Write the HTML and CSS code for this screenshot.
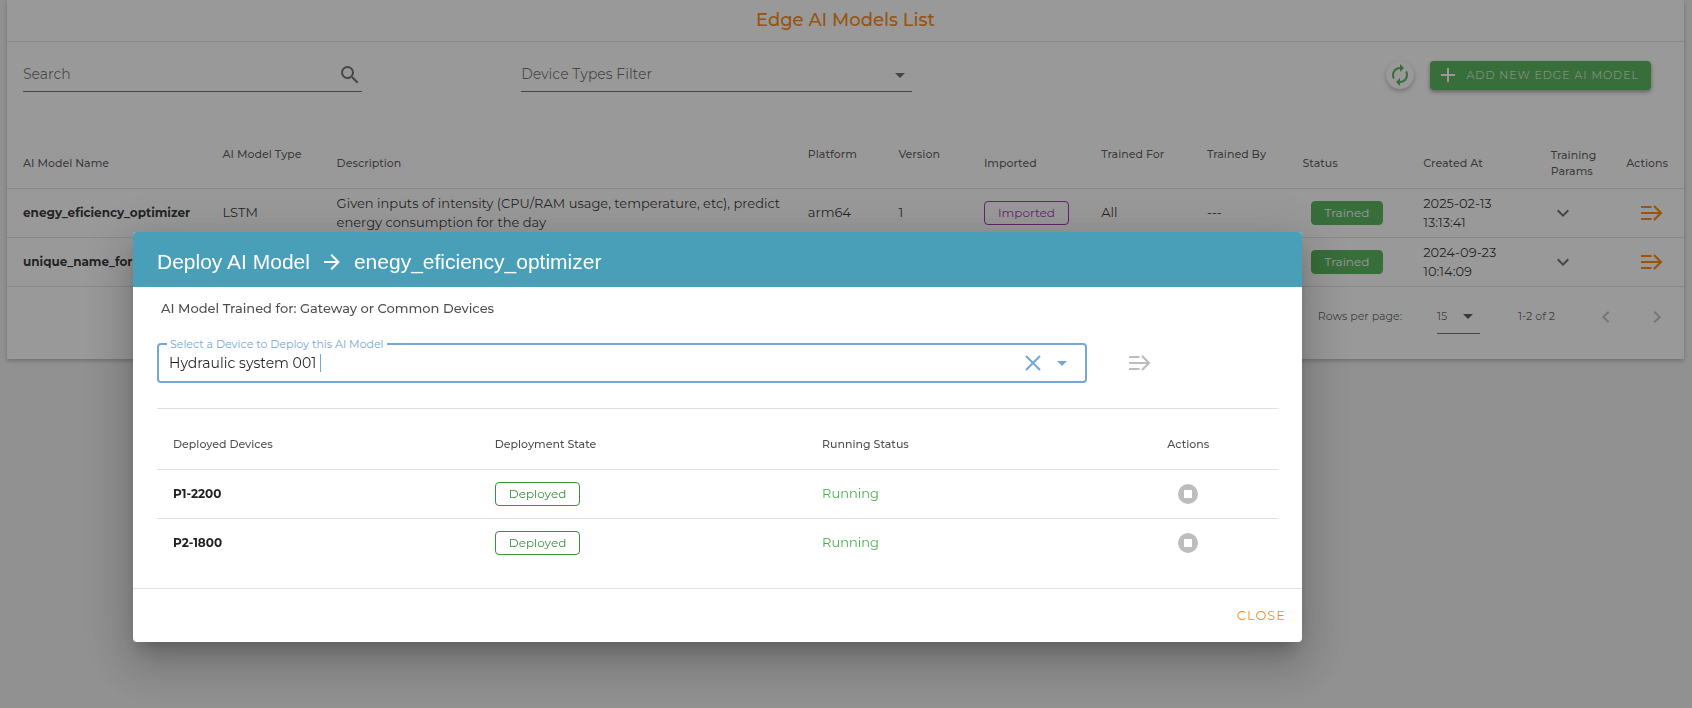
FILE: index.html
```
<!DOCTYPE html>
<html lang="en">
<head>
    <meta charset="UTF-8">
    <meta name="viewport" content="width=device-width, initial-scale=1.0">
    <title>Edge AI Models List</title>
    <link rel="stylesheet" href="styles.css">
</head>
<body>
    <!-- Shared icons -->
    <svg class="sprite" aria-hidden="true">
        <symbol id="icon-deploy" viewBox="0 0 24 24">
            <path d="M2 6h10.500M2 12h18.500M2 18h10.500M15 5l7 7l-7 7" fill="none" stroke="currentColor" stroke-width="2.200"/>
        </symbol>
        <symbol id="icon-caret" viewBox="0 0 24 24">
            <path d="M7 10l5 5l5-5z" fill="currentColor"/>
        </symbol>
        <symbol id="icon-down" viewBox="0 0 24 24">
            <path d="M7.410 8.580L12 13.170l4.590-4.590L18 10l-6 6l-6-6z" fill="currentColor"/>
        </symbol>
        <symbol id="icon-stop" viewBox="0 0 24 24">
            <path d="M12 2a10 10 0 1 0 0 20a10 10 0 0 0 0-20M8 8h8v8H8z" fill="currentColor" fill-rule="evenodd"/>
        </symbol>
    </svg>

    <main class="card">
        <h1 class="card-title">Edge AI Models List</h1>

        <div class="toolbar">
            <label class="field search">
                <input type="text" placeholder="Search" aria-label="Search">
                <svg class="icon" viewBox="0 0 24 24"><path d="M9.500 3A6.500 6.500 0 0 1 16 9.500c0 1.610-.590 3.090-1.560 4.230l.270.270h.790l5 5l-1.500 1.500l-5-5v-.790l-.270-.270A6.516 6.516 0 0 1 9.500 16a6.500 6.500 0 0 1 0-13m0 2C7 5 5 7 5 9.500S7 14 9.500 14S14 12 14 9.500S12 5 9.500 5z" fill="currentColor"/></svg>
            </label>
            <label class="field filter">
                <select aria-label="Device Types Filter">
                    <option>Device Types Filter</option>
                </select>
                <svg class="icon"><use href="#icon-caret"/></svg>
            </label>
            <div class="toolbar-actions">
                <button type="button" class="refresh" aria-label="Refresh">
                    <svg class="icon" viewBox="0 0 24 24"><path d="M12 6v3l4-4l-4-4v3a8 8 0 0 0-8 8c0 1.570.460 3.030 1.240 4.260L6.700 14.800A5.900 5.900 0 0 1 6 12a6 6 0 0 1 6-6m6.760 1.740L17.300 9.200c.440.840.700 1.800.700 2.800a6 6 0 0 1-6 6v-3l-4 4l4 4v-3a8 8 0 0 0 8-8c0-1.570-.460-3.030-1.240-4.260z" fill="currentColor"/></svg>
                </button>
                <button type="button" class="add">
                    <svg class="icon" viewBox="0 0 24 24"><path d="M19 13h-6v6h-2v-6H5v-2h6V5h2v6h6z" fill="currentColor"/></svg>
                    ADD NEW EDGE AI MODEL
                </button>
            </div>
        </div>

        <table class="models">
            <thead>
                <tr>
                    <th class="col-name">AI Model Name</th>
                    <th class="col-type top">AI Model Type</th>
                    <th class="col-description">Description</th>
                    <th class="col-platform top">Platform</th>
                    <th class="col-version top">Version</th>
                    <th class="col-imported">Imported</th>
                    <th class="col-for top">Trained For</th>
                    <th class="col-by top">Trained By</th>
                    <th class="col-status">Status</th>
                    <th class="col-created">Created At</th>
                    <th class="col-params">Training Params</th>
                    <th class="col-actions">Actions</th>
                </tr>
            </thead>
            <tbody>
                <tr>
                    <td class="name">enegy_eficiency_optimizer</td>
                    <td>LSTM</td>
                    <td class="description">Given inputs of intensity (CPU/RAM usage, temperature, etc), predict energy consumption for the day</td>
                    <td>arm64</td>
                    <td>1</td>
                    <td><span class="chip imported">Imported</span></td>
                    <td>All</td>
                    <td>---</td>
                    <td class="status"><span class="chip trained">Trained</span></td>
                    <td>2025-02-13 13:13:41</td>
                    <td><button type="button" class="icon-button" aria-label="Show training params"><svg class="icon"><use href="#icon-down"/></svg></button></td>
                    <td class="actions"><button type="button" class="icon-button deploy" aria-label="Deploy"><svg class="icon"><use href="#icon-deploy"/></svg></button></td>
                </tr>
                <tr>
                    <td class="name">unique_name_for</td>
                    <td></td>
                    <td></td>
                    <td></td>
                    <td></td>
                    <td></td>
                    <td></td>
                    <td></td>
                    <td class="status"><span class="chip trained">Trained</span></td>
                    <td>2024-09-23 10:14:09</td>
                    <td><button type="button" class="icon-button" aria-label="Show training params"><svg class="icon"><use href="#icon-down"/></svg></button></td>
                    <td class="actions"><button type="button" class="icon-button deploy" aria-label="Deploy"><svg class="icon"><use href="#icon-deploy"/></svg></button></td>
                </tr>
            </tbody>
        </table>

        <div class="pagination">
            <label for="rows">Rows per page:</label>
            <div class="rows-select">
                <select id="rows">
                    <option>15</option>
                </select>
                <svg class="icon"><use href="#icon-caret"/></svg>
            </div>
            <span class="range">1-2 of 2</span>
            <button type="button" class="icon-button" aria-label="Previous page" disabled>
                <svg class="icon" viewBox="0 0 24 24"><path d="M15.410 16.580L10.830 12l4.580-4.590L14 6l-6 6l6 6z" fill="currentColor"/></svg>
            </button>
            <button type="button" class="icon-button" aria-label="Next page" disabled>
                <svg class="icon" viewBox="0 0 24 24"><path d="M8.590 16.580L13.170 12L8.590 7.410L10 6l6 6l-6 6z" fill="currentColor"/></svg>
            </button>
        </div>
    </main>

    <div class="overlay">
        <section class="dialog" role="dialog" aria-modal="true" aria-labelledby="dialog-title">
            <h2 class="dialog-title" id="dialog-title">
                Deploy AI Model
                <svg class="icon" viewBox="0 0 24 24"><path d="M4 11v2h12l-5.500 5.500l1.420 1.420L19.840 12l-7.920-7.920L10.500 5.500L16 11z" fill="currentColor"/></svg>
                enegy_eficiency_optimizer
            </h2>

            <div class="dialog-body">
                <p class="trained-for">AI Model Trained for: Gateway or Common Devices</p>

                <div class="device-row">
                    <div class="device-field">
                        <label for="device">Select a Device to Deploy this AI Model</label>
                        <input type="text" id="device" value="Hydraulic system 001">
                        <span class="cursor"></span>
                        <button type="button" class="icon-button clear" aria-label="Clear">
                            <svg class="icon" viewBox="0 0 24 24"><path d="M5 5l14 14M19 5L5 19" fill="none" stroke="currentColor" stroke-width="2"/></svg>
                        </button>
                        <button type="button" class="icon-button" aria-label="Open list">
                            <svg class="icon"><use href="#icon-caret"/></svg>
                        </button>
                    </div>
                    <button type="button" class="icon-button" aria-label="Deploy to device" disabled>
                        <svg class="icon"><use href="#icon-deploy"/></svg>
                    </button>
                </div>

                <table class="devices">
                    <thead>
                        <tr>
                            <th class="col-device">Deployed Devices</th>
                            <th class="col-state">Deployment State</th>
                            <th class="col-running">Running Status</th>
                            <th class="col-stop">Actions</th>
                        </tr>
                    </thead>
                    <tbody>
                        <tr>
                            <td class="name">P1-2200</td>
                            <td><span class="chip deployed">Deployed</span></td>
                            <td class="running">Running</td>
                            <td class="stop"><button type="button" class="icon-button" aria-label="Stop" disabled><svg class="icon"><use href="#icon-stop"/></svg></button></td>
                        </tr>
                        <tr>
                            <td class="name">P2-1800</td>
                            <td><span class="chip deployed">Deployed</span></td>
                            <td class="running">Running</td>
                            <td class="stop"><button type="button" class="icon-button" aria-label="Stop" disabled><svg class="icon"><use href="#icon-stop"/></svg></button></td>
                        </tr>
                    </tbody>
                </table>
            </div>

            <div class="dialog-footer">
                <button type="button" class="close">CLOSE</button>
            </div>
        </section>
    </div>
</body>
</html>
```
FILE: styles.css
```
* {
    margin: 0;
    padding: 0;
    box-sizing: border-box;
}

body {
    font-family: Montserrat, Inter, sans-serif;
    font-size: 13px;
    line-height: 19px;
    color: rgba(0, 0, 0, 0.87);
    background-color: #f0f0f0;
    min-height: 100vh;
    padding: 0 8px 0 7px;
}

button,
input,
select {
    font: inherit;
    color: inherit;
    background: none;
    border: none;
    outline: none;
}

button {
    cursor: pointer;
}

select {
    appearance: none;
}

.sprite {
    display: none;
}

.icon {
    display: block;
    flex: none;
    width: 24px;
    height: 24px;
}

/* Models card */
.card {
    background-color: #fff;
    box-shadow: 0 2px 4px rgba(0, 0, 0, 0.25);
    padding-bottom: 16px;
}

.card-title {
    height: 42px;
    line-height: 40px;
    border-bottom: 1px solid rgba(0, 0, 0, 0.12);
    text-align: center;
    font-size: 18px;
    font-weight: 500;
    color: #fb8000;
}

.toolbar {
    display: flex;
    align-items: center;
    padding: 16px 33px 0 16px;
}

.field {
    display: flex;
    align-items: center;
    height: 34px;
    border-bottom: 1px solid rgba(0, 0, 0, 0.6);
    color: rgba(0, 0, 0, 0.6);
}

.field input,
.field select {
    flex: 1;
    min-width: 0;
    font-size: 14px;
}

.field input::placeholder {
    color: rgba(0, 0, 0, 0.6);
}

.search {
    width: 20.8%;
}

.filter {
    width: 24%;
    margin-left: 9.8%;
}

.toolbar-actions {
    display: flex;
    align-items: center;
    gap: 16px;
    margin-left: auto;
}

.refresh {
    padding: 2px;
    border-radius: 50%;
    color: #4caf50;
    box-shadow: 0 2px 4px rgba(0, 0, 0, 0.3);
}

.add {
    display: flex;
    align-items: center;
    gap: 7px;
    height: 29px;
    padding: 0 12px 0 6px;
    border-radius: 4px;
    background-color: #4caf50;
    box-shadow: 0 2px 4px rgba(0, 0, 0, 0.4);
    color: #fff;
    font-size: 11px;
    font-weight: 300;
    letter-spacing: 1px;
}

/* Tables */
table {
    width: 100%;
    border-collapse: collapse;
    table-layout: fixed;
}

th {
    padding: 0 16px;
    text-align: left;
    font-size: 11px;
    line-height: 16px;
    font-weight: 500;
    color: rgba(0, 0, 0, 0.7);
}

td {
    height: 49px;
    padding: 0 16px;
    border-top: 1px solid rgba(0, 0, 0, 0.12);
}

.name {
    font-size: 12px;
    font-weight: 700;
    white-space: nowrap;
}

.models {
    margin-top: 46px;
    border-bottom: 1px solid rgba(0, 0, 0, 0.12);
}

.models th {
    height: 50px;
}

.models .top {
    padding-top: 8px;
    vertical-align: top;
}

.models .col-type,
.models .col-params,
.models .col-actions {
    padding-right: 8px;
}

.models .description {
    padding-right: 8px;
}

.col-name { width: 11.9%; }
.col-type { width: 6.8%; }
.col-description { width: 28.1%; }
.col-platform { width: 5.4%; }
.col-version { width: 5.1%; }
.col-imported { width: 7%; }
.col-for { width: 6.3%; }
.col-by { width: 5.7%; }
.col-status { width: 7.2%; }
.col-created { width: 7.6%; }
.col-params { width: 4.5%; }
.col-actions { width: 4.4%; }

.chip {
    display: inline-block;
    height: 24px;
    padding: 0 13px;
    border: 1px solid;
    border-radius: 4px;
    font-size: 12px;
    line-height: 22px;
}

.imported {
    color: #9c27b0;
}

.trained {
    background-color: #4caf50;
    border-color: #4caf50;
    color: #fff;
}

.deployed {
    color: #388e3c;
}

.models .status {
    padding-left: 24px;
}

.models .actions {
    padding-left: 29px;
    padding-right: 0;
}

.icon-button {
    display: block;
    color: rgba(0, 0, 0, 0.6);
}

.icon-button:disabled {
    color: rgba(0, 0, 0, 0.26);
    cursor: default;
}

.deploy {
    color: #fb8000;
}

/* Pagination */
.pagination {
    display: flex;
    align-items: center;
    justify-content: flex-end;
    height: 52px;
    margin-top: 4px;
    padding-right: 15px;
    font-size: 11px;
    color: rgba(0, 0, 0, 0.7);
}

.rows-select {
    display: flex;
    align-items: center;
    width: 43px;
    height: 34px;
    margin: 0 38px 0 35px;
    border-bottom: 1px solid rgba(0, 0, 0, 0.6);
}

.rows-select select {
    width: 19px;
}

.range {
    margin-right: 39px;
}

.pagination .icon-button + .icon-button {
    margin-left: 27px;
}

/* Deploy dialog */
.overlay {
    position: fixed;
    inset: 0;
    padding: 232px 390px 0 133px;
    background-color: rgba(33, 33, 33, 0.46);
}

.dialog {
    overflow: hidden;
    border-radius: 4px;
    background-color: #fff;
    box-shadow: 0 11px 15px -7px rgba(0, 0, 0, 0.2), 0 24px 38px 3px rgba(0, 0, 0, 0.14), 0 9px 46px 8px rgba(0, 0, 0, 0.12);
}

.dialog-title {
    display: flex;
    align-items: center;
    gap: 10px;
    height: 55px;
    padding: 4px 24px 0;
    background-color: #489fb7;
    color: #fff;
    font-family: "Liberation Sans", Arial, sans-serif;
    font-size: 21px;
    font-weight: 400;
}

.dialog-body {
    padding: 12px 24px 21px;
}

.trained-for {
    padding: 0 4px;
    font-weight: 500;
    color: rgba(0, 0, 0, 0.7);
}

.device-row {
    display: flex;
    align-items: center;
    gap: 40px;
    padding: 25px 0;
    border-bottom: 1px solid rgba(0, 0, 0, 0.12);
}

.device-field {
    position: relative;
    display: flex;
    align-items: center;
    width: 83%;
    height: 40px;
    padding: 0 11px 0 10px;
    border: 2px solid #75a7d6;
    border-radius: 4px;
}

/* The label sits on the top border */
.device-field label {
    position: absolute;
    top: -10px;
    left: 8px;
    padding: 0 3px;
    background-color: #fff;
    color: #75a7d6;
    font-size: 11px;
}

.device-field input {
    field-sizing: content;
    font-size: 14px;
}

.cursor {
    width: 1px;
    height: 18px;
    margin-left: 4px;
    background-color: #75a7d6;
}

.device-field .icon-button {
    color: #75a7d6;
}

.device-field .clear {
    margin-left: auto;
    margin-right: 5px;
}

.devices {
    margin-top: 11px;
}

.devices th {
    height: 49px;
}

.col-device { width: 28.7%; }
.col-state { width: 29.2%; }
.col-running { width: 26.1%; }
.col-stop { width: 16%; }

.devices .col-stop {
    text-align: center;
}

.running {
    color: #4caf50;
}

.stop .icon-button {
    margin: 0 auto;
}

.dialog-footer {
    display: flex;
    align-items: center;
    justify-content: flex-end;
    height: 54px;
    padding: 0 16px;
    border-top: 1px solid rgba(0, 0, 0, 0.12);
}

.close {
    color: #ff8c1a;
    letter-spacing: 1px;
}
```
